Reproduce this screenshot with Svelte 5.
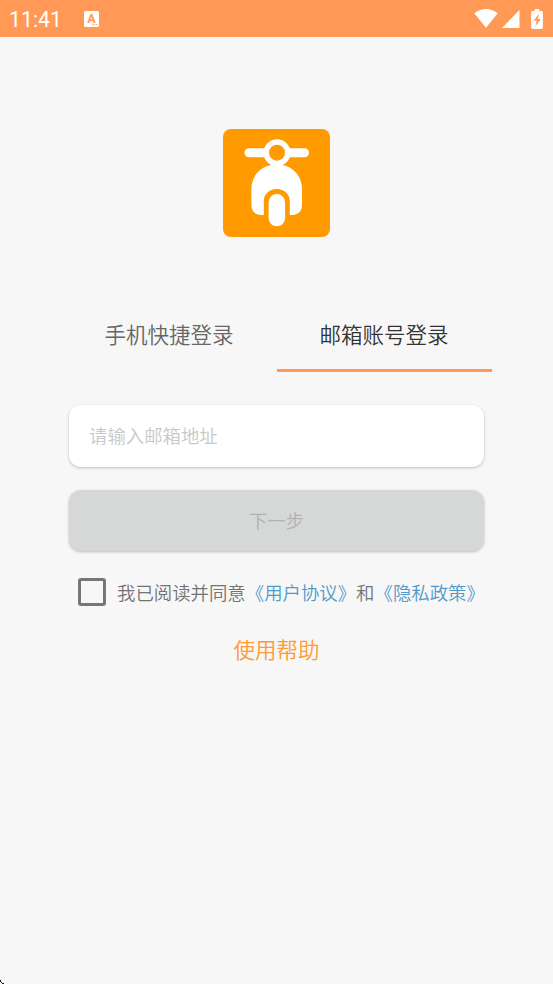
<script>
	const tabs = [
		{ id: 'phone', label: '手机快捷登录' },
		{ id: 'email', label: '邮箱账号登录' }
	];

	let activeTab = $state('email');
	let account = $state('');
	let agreed = $state(false);

	const placeholder = $derived(activeTab === 'email' ? '请输入邮箱地址' : '请输入手机号码');
	const canSubmit = $derived(account.length > 0 && agreed);
</script>

<div class="screen">
	<header class="status-bar">
		<span class="clock">11:41</span>
		<svg class="keyboard" width="15" height="16" viewBox="0 0 15 16">
			<rect width="15" height="16" rx="1.6" fill="#fff" />
			<text class="keyboard-letter" x="7.5" y="11.6" text-anchor="middle">A</text>
			<path d="M8 13.8h6" stroke="#ff9955" stroke-width="1" stroke-dasharray="1.2 .6" />
		</svg>
		<div class="indicators">
			<svg class="wifi" width="24" height="19" viewBox="0 0 24 19">
				<path d="M.3 4.3C3.5 1.7 7.5.1 12 .1s8.500 1.600 11.700 4.200L12 18.700Z" fill="#fff" />
			</svg>
			<svg class="signal" width="18" height="18" viewBox="0 0 18 18">
				<path d="M17.500 0v18H0Z" fill="#fff" />
			</svg>
			<svg class="battery" width="12" height="20" viewBox="0 0 12 20">
				<path
					d="M3.700 0h4.500v2h2.300c.8 0 1.400.6 1.400 1.300v15.300c0 .8-.6 1.400-1.400 1.400h-9C.7 20 .1 19.400.1 18.600V3.300C.1 2.600.7 2 1.500 2h2.200Z"
					fill="#fff"
				/>
				<path d="M8 4.800 2.700 11.700h2.900L4.500 17.200l5.300-7.300H6.900Z" fill="#ff9955" />
			</svg>
		</div>
	</header>

	<main>
		<svg class="logo" width="107" height="108" viewBox="0 0 107 108">
			<rect width="107" height="108" rx="8" fill="#ff9a00" />
			<path d="M26 23.700h55.500" stroke="#fff" stroke-width="9" stroke-linecap="round" />
			<path
				d="M28.400 60C28.400 46 39 35.500 53.700 35.500S79 46 79 60v16c0 6.500-4.500 10-9.500 10h-2.700V72c0-7-5.500-12-13-12s-13 5-13 12v14h-3c-5 0-9.400-3.500-9.400-10Z"
				fill="#fff"
			/>
			<circle cx="54" cy="23.700" r="13.500" fill="#fff" />
			<circle cx="54" cy="23.700" r="8" fill="#ff9a00" />
			<rect x="45.600" y="65" width="16.500" height="32.300" rx="8.250" fill="#fff" />
		</svg>

		<nav class="tabs">
			{#each tabs as tab (tab.id)}
				<button
					class="tab"
					class:tab--active={activeTab === tab.id}
					onclick={() => (activeTab = tab.id)}
				>
					{tab.label}
				</button>
			{/each}
		</nav>

		<div class="form">
			<input class="account" type="text" bind:value={account} {placeholder} />
			<button class="next" disabled={!canSubmit}>下一步</button>
			<label class="agreement">
				<input type="checkbox" bind:checked={agreed} />
				<span>我已阅读并同意<a href="#terms">《用户协议》</a>和<a href="#privacy">《隐私政策》</a></span>
			</label>
		</div>

		<a class="help" href="#help">使用帮助</a>
	</main>

	<svg class="corner" width="4" height="4" viewBox="0 0 4 4" shape-rendering="crispEdges">
		<path d="M0 0h1v2H0ZM1 2h1v1H1ZM2 3h2v1H2Z" fill="#111" />
	</svg>
</div>

<style>
	:global(body) {
		background: #f7f7f7;
	}

	.screen {
		position: relative;
		display: flex;
		flex-direction: column;
		height: 984px;
		overflow: hidden;
		background: #f7f7f7;
		font-family: Roboto, 'Noto Sans CJK SC', sans-serif;
		font-weight: 350;
	}

	button,
	input {
		margin: 0;
		border: 0;
		font: inherit;
		box-sizing: border-box;
	}

	a {
		color: #5199cb;
		text-decoration: none;
	}

	.status-bar {
		display: flex;
		align-items: center;
		height: 37px;
		padding: 0 10px 0 9px;
		box-sizing: border-box;
		background: #ff9955;
		color: #fff;
	}

	.clock {
		width: 75px;
		font-size: 21.3px;
		font-weight: 450;
		line-height: 37px;
		padding-top: 2px;
		box-sizing: border-box;
	}

	.keyboard-letter {
		fill: #ff9955;
		font-size: 12.5px;
		font-weight: 700;
	}

	.indicators {
		display: flex;
		align-items: center;
		margin-left: auto;
	}

	.wifi {
		margin-right: 4px;
	}

	.signal {
		margin: 1px 11px 0 0;
	}

	main {
		display: flex;
		flex-direction: column;
		align-items: center;
		padding-top: 92px;
	}

	.logo {
		display: block;
	}

	.tabs {
		display: flex;
		width: 430px;
		height: 74px;
		margin-top: 61px;
	}

	.tab {
		flex: 1;
		padding: 0;
		border-bottom: 3px solid transparent;
		background: none;
		color: #666;
		font-size: 21.5px;
	}

	.tab--active {
		border-bottom-color: #ff9955;
		color: #333;
	}

	.form {
		display: flex;
		flex-direction: column;
		width: 415px;
		margin-top: 33px;
		font-size: 18.4px;
	}

	.account,
	.next {
		border-radius: 12px;
		box-shadow: 0 1px 3px rgba(0, 0, 0, 0.24);
	}

	.account {
		height: 62px;
		padding: 0 20px;
		background: #fff;
		color: #333;
		outline: none;
	}

	.account::placeholder {
		color: #c8c8c8;
		opacity: 1;
	}

	.next {
		height: 61px;
		margin-top: 23px;
		padding: 0 0 2px;
		background: #ff9955;
		color: #fff;
	}

	.next:disabled {
		background: #d6d8d7;
		color: #b2b2b2;
	}

	.agreement {
		display: flex;
		align-items: center;
		height: 28px;
		margin: 27px 0 0 9px;
		color: #737373;
		white-space: nowrap;
	}

	.agreement input {
		flex: none;
		width: 28px;
		height: 28px;
		margin-right: 11px;
		border: 3px solid #777;
		border-radius: 3px;
		appearance: none;
	}

	.agreement input:checked {
		border-color: #ff9955;
		background: #ff9955;
	}

	.help {
		margin-top: 29px;
		color: #ff9933;
		font-size: 21.5px;
		line-height: 32px;
	}

	.corner {
		position: absolute;
		left: 0;
		bottom: 0;
	}
</style>
